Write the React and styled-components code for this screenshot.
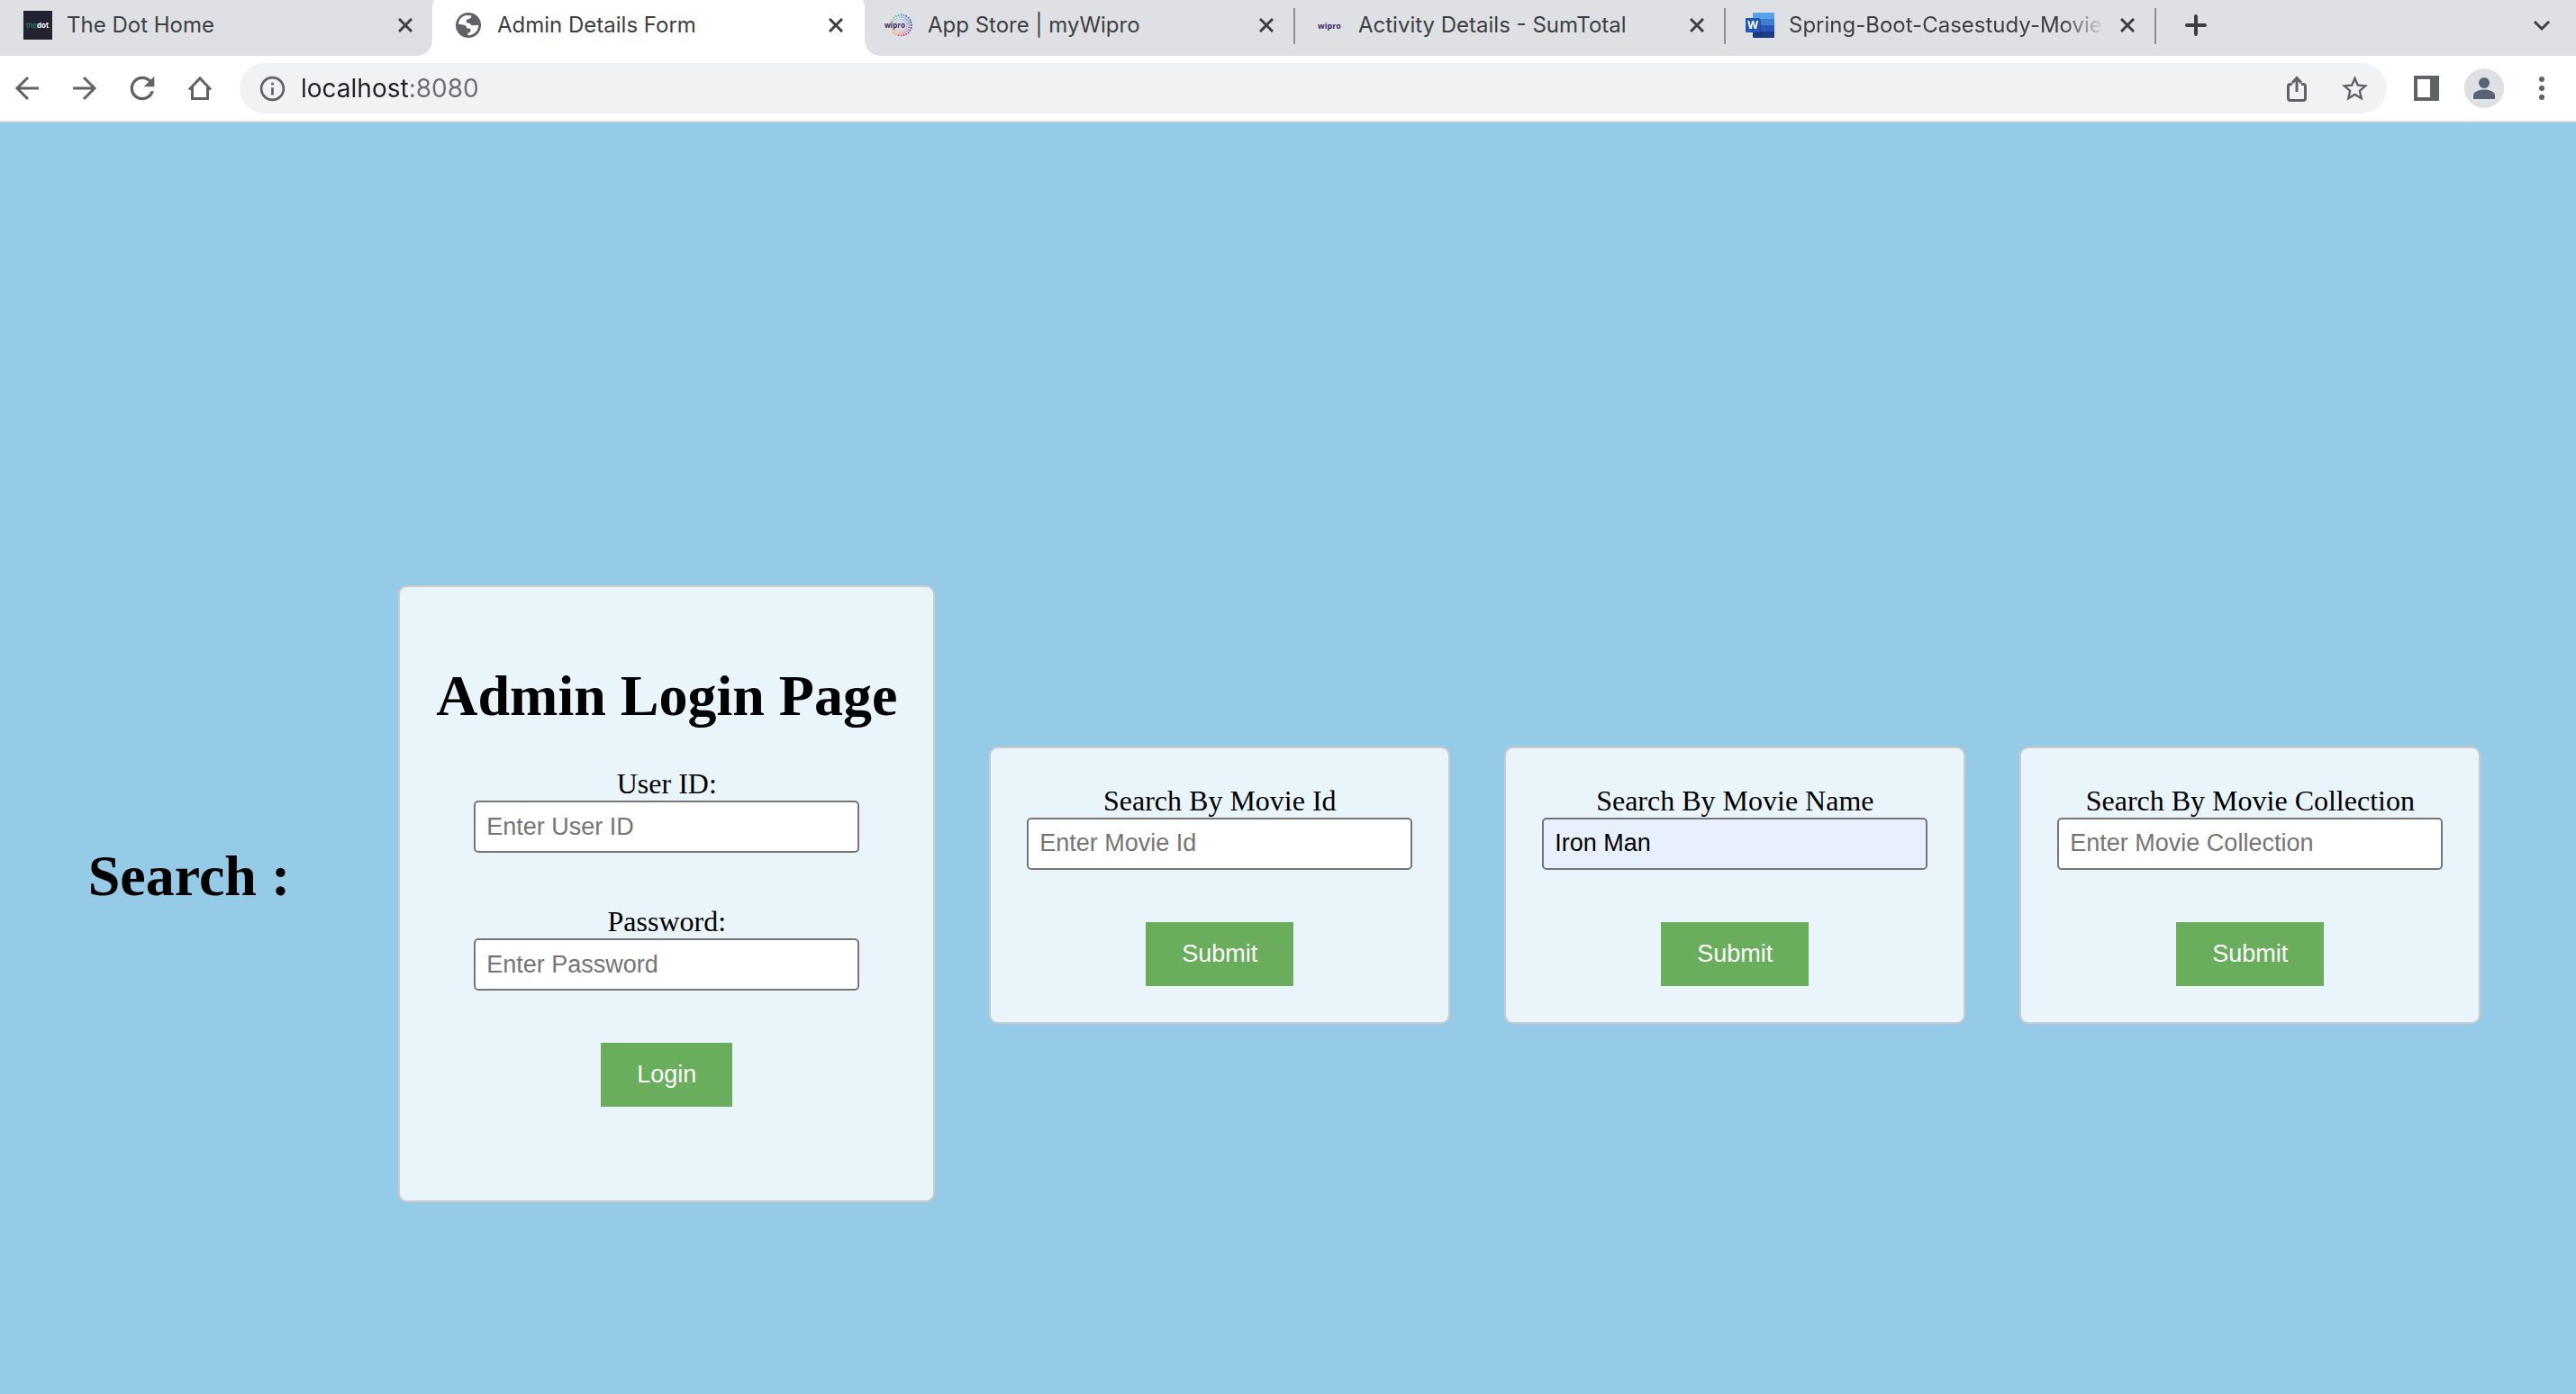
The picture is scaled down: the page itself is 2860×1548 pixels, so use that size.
import React, { useState } from "react";
import styled, { createGlobalStyle, css } from "styled-components";
import { MdRefresh, MdInfoOutline, MdStarBorder } from "react-icons/md";

const GlobalStyle = createGlobalStyle`
  * { box-sizing: border-box; }
  body {
    margin: 0;
    background: #96cbe8;
    font-family: "Liberation Serif", "Times New Roman", serif;
  }
`;

const uiFont = css`
  font-family: Inter, Roboto, sans-serif;
`;

/* ---------- Browser chrome ---------- */

const divider = css`
  background: linear-gradient(#8b8e93, #8b8e93) 0 9px / 2px 40px no-repeat;
`;

const TabStrip = styled.div`
  display: flex;
  height: 62px;
  padding: 0 6px 0 2px;
  background: #dee0e4;
  overflow: hidden;
`;

const Tab = styled.div`
  position: relative;
  display: flex;
  align-items: center;
  gap: 16px;
  flex: 0 1 478px;
  min-width: 0;
  height: 56px;
  padding: 0 22px 0 24px;
  ${(p) => p.$divided && divider}
  ${(p) =>
    p.$active &&
    css`
      flex-basis: 480px;
      height: 70px;
      margin: -8px -2px 0 0;
      padding: 8px 24px 6px;
      border-radius: 16px 16px 0 0;
      background: #fff;
      &::before,
      &::after {
        content: "";
        position: absolute;
        bottom: 0;
        width: 16px;
        height: 16px;
      }
      &::before {
        left: -16px;
        background: radial-gradient(circle at 0 0, transparent 15px, #fff 16px);
      }
      &::after {
        right: -16px;
        background: radial-gradient(circle at 100% 0, transparent 15px, #fff 16px);
      }
    `}
`;

const TabTitle = styled.span`
  ${uiFont}
  flex: 1;
  min-width: 0;
  overflow: hidden;
  white-space: nowrap;
  font-size: 24px;
  line-height: 32px;
  color: #3c4043;
  ${(p) =>
    p.$faded &&
    css`
      mask-image: linear-gradient(90deg, #000 calc(100% - 48px), transparent);
    `}
`;

const Favicon = styled.span`
  display: flex;
  flex: none;
  align-items: center;
  justify-content: center;
  width: 32px;
  height: 32px;
  color: #5f6368;
`;

const PlainButton = styled.button`
  display: flex;
  flex: none;
  align-items: center;
  justify-content: center;
  padding: 0;
  border: 0;
  background: none;
  color: #5f6368;
`;

const CloseButton = styled(PlainButton)`
  width: 16px;
  height: 16px;
  color: #3c4043;
`;

const NewTabButton = styled(PlainButton)`
  width: 92px;
  height: 56px;
  color: #3c4043;
  ${divider}
`;

const TabSearchButton = styled(PlainButton)`
  width: 64px;
  height: 56px;
  margin-left: auto;
  color: #3c4043;
`;

const Toolbar = styled.div`
  display: flex;
  align-items: center;
  gap: 20px;
  height: 74px;
  padding: 0 14px 0 6px;
  border-bottom: 2px solid #dadcdf;
  background: #fff;
`;

const ButtonGroup = styled.div`
  display: flex;
  gap: 16px;
`;

const IconButton = styled(PlainButton)`
  width: 48px;
  height: 48px;
`;

const AddressBar = styled.div`
  display: flex;
  flex: 1;
  align-items: center;
  gap: 8px;
  min-width: 0;
  height: 56px;
  padding: 0 12px;
  border-radius: 28px;
  background: #f0f2f4;
`;

/* The host is drawn darker than the port. */
const AddressInput = styled.input`
  ${uiFont}
  flex: 1;
  min-width: 0;
  padding: 0;
  border: 0;
  outline: 0;
  font-size: 28px;
  line-height: 40px;
  color: transparent;
  caret-color: #202124;
  background: linear-gradient(90deg, #202124 120px, #6b6f74 120px);
  background-clip: text;
`;

/* ---------- Page ---------- */

const Main = styled.main`
  display: flex;
  align-items: center;
  justify-content: center;
  gap: 60px;
  padding: 514px 8px 60px 0;
`;

const Title = styled.h1`
  margin: 0;
  font-size: 64px;
  line-height: 74px;
  font-weight: bold;
  color: #000;
`;

const SearchTitle = styled(Title)`
  margin: 0 60px 40px 0;
  white-space: nowrap;
`;

const Card = styled.form`
  display: flex;
  flex-direction: column;
  align-items: center;
  gap: 58px;
  margin-bottom: 20px;
  padding: 40px;
  border: 2px solid #ccc;
  border-radius: 10px;
  background: #e9f5fa;
`;

const LoginCard = styled(Card)`
  margin-bottom: 0;
  padding: 84px 40px 104px;
`;

const LoginHead = styled.div`
  display: flex;
  flex-direction: column;
  align-items: center;
  gap: 42px;
`;

const Field = styled.div`
  display: flex;
  flex-direction: column;
  align-items: center;
`;

const Label = styled.label`
  font-size: 32px;
  line-height: 37px;
  color: #000;
`;

const TextInput = styled.input`
  width: 428px;
  height: 58px;
  padding: 0 12px;
  border: 2px solid #767676;
  border-radius: 5px;
  outline: 0;
  background: ${(p) => (p.$filled ? "#e8effd" : "#fff")};
  font-family: "Liberation Sans", Arial, sans-serif;
  font-size: 27px;
  color: #000;
  &::placeholder {
    color: #757575;
    opacity: 1;
  }
`;

const ActionButton = styled.button`
  height: 71px;
  padding: 0 40px;
  border: 0;
  background: #69ad5d;
  font-family: "Liberation Sans", Arial, sans-serif;
  font-size: 27px;
  color: #fff;
`;

/* ---------- Drawings ---------- */

const Glyph = ({ children, size = 48, width = 3 }) => (
  <svg
    width={size}
    height={size}
    viewBox={`0 0 ${size} ${size}`}
    fill="none"
    stroke="currentColor"
    strokeWidth={width}
    aria-hidden="true"
  >
    {children}
  </svg>
);

const CloseIcon = () => (
  <Glyph size={16}>
    <path d="M1 1L15 15M15 1L1 15" />
  </Glyph>
);

const GlobeIcon = () => (
  <svg width="28" height="28" viewBox="30 30 84 84" aria-hidden="true">
    <circle cx="72" cy="72" r="42" fill="#5f6368" />
    <path
      d="M64 39L82 40L81 47L72 52L66 53L65 62L72 65L77 65L81 71L88 73L106 71C105 90 92 105 70 106L70 98L78 95L80 88L77 83L66 82L65 75L58 71L39 68C40 53 50 42 64 39z"
      fill="#fff"
    />
  </svg>
);

const DotIcon = () => (
  <svg width="32" height="32" viewBox="0 0 32 32" aria-hidden="true">
    <rect width="32" height="32" fill="#212330" />
    <text x="3" y="19" fontFamily="Inter, sans-serif" fontSize="8" fill="#2f8577">
      the<tspan fill="#fff" fontWeight="700">dot</tspan>.
    </text>
  </svg>
);

const ringColors = ["#3f6fb5", "#2b4a9b", "#4b3a8c", "#8a3a8c", "#c43d78", "#e0567a", "#f0a050", "#f2c860", "#b9d58a", "#7cc4a0", "#6cb8d8", "#4f93cc"];

const WiproRingIcon = () => (
  <svg width="32" height="32" viewBox="0 0 32 32" aria-hidden="true">
    {[11.5, 9, 6.5, 4].map((r, ring) =>
      Array.from({ length: 24 }, (_, i) => {
        const a = (i / 24) * Math.PI * 2 - Math.PI / 3;
        return (
          <circle
            key={`${ring}-${i}`}
            cx={18.5 + r * Math.cos(a)}
            cy={16 + r * Math.sin(a)}
            r={1 - ring * 0.2}
            opacity={1 - ring * 0.22}
            fill={ringColors[Math.floor(i / 2)]}
          />
        );
      })
    )}
    <text x="0" y="19" fontFamily="Open Sans, sans-serif" fontSize="8" fontWeight="700" fill="#3f2a6b">
      wipro
    </text>
  </svg>
);

const WiproIcon = () => (
  <svg width="32" height="32" viewBox="0 0 32 32" aria-hidden="true">
    <text x="16" y="20" textAnchor="middle" fontFamily="Open Sans, sans-serif" fontSize="9" fontWeight="700" fill="#3f2a6b">
      wipro
    </text>
  </svg>
);

const WordIcon = () => (
  <svg width="32" height="32" viewBox="0 0 32 32" aria-hidden="true">
    <path d="M9 2H31a1 1 0 0 1 1 1V9H8V3a1 1 0 0 1 1-1z" fill="#5aa3ea" />
    <path d="M8 9H32V16H8z" fill="#3f7bd0" />
    <path d="M8 16H32V23H8z" fill="#2758b8" />
    <path d="M8 23H32V29a1 1 0 0 1-1 1H9a1 1 0 0 1-1-1z" fill="#1d3b85" />
    <path d="M8 10h9v15a1 1 0 0 1-1 1H8z" fill="#16306e" opacity=".5" />
    <rect y="8" width="16" height="16" rx="1" fill="#2257b7" />
    <text x="8" y="20" textAnchor="middle" fontFamily="Open Sans, sans-serif" fontSize="12" fontWeight="700" fill="#fff">
      W
    </text>
  </svg>
);

const BackIcon = () => (
  <Glyph>
    <path d="M37 24H13M25 12L13 24L25 36" />
  </Glyph>
);

const ForwardIcon = () => (
  <Glyph>
    <path d="M11 24H35M23 12L35 24L23 36" />
  </Glyph>
);

const HomeIcon = () => (
  <Glyph>
    <path d="M12 25.5L24 13L36 25.5M15.5 23V35.5H32.5V23" />
  </Glyph>
);

const ShareIcon = () => (
  <Glyph>
    <path d="M19 19.5H17a2.5 2.5 0 0 0-2.5 2.5V35a2.5 2.5 0 0 0 2.5 2.5H31a2.5 2.5 0 0 0 2.5-2.5V22a2.5 2.5 0 0 0-2.5-2.5H29M24 28V12.5M19 18L24 12.5L29 18" />
  </Glyph>
);

const PanelIcon = () => (
  <Glyph width={4}>
    <path d="M12 12H36V36H12z" />
    <path d="M28 10H38V38H28z" fill="currentColor" stroke="none" />
  </Glyph>
);

const AvatarIcon = () => (
  <svg width="48" height="48" viewBox="0 0 48 48" aria-hidden="true">
    <circle cx="24" cy="24" r="22" fill="#dee0e4" />
    <circle cx="24" cy="18" r="6" fill="#5a6375" />
    <path d="M12 36V32C12 28 18 25.5 24 25.5S36 28 36 32V36z" fill="#5a6375" />
  </svg>
);

const MenuIcon = () => (
  <svg width="48" height="48" viewBox="0 0 48 48" fill="currentColor" aria-hidden="true">
    <circle cx="24" cy="14" r="3" />
    <circle cx="24" cy="24" r="3" />
    <circle cx="24" cy="34" r="3" />
  </svg>
);

const tabs = [
  { title: "The Dot Home", icon: <DotIcon /> },
  { title: "Admin Details Form", icon: <GlobeIcon />, active: true },
  { title: "App Store | myWipro", icon: <WiproRingIcon /> },
  { title: "Activity Details - SumTotal", icon: <WiproIcon />, divided: true },
  { title: "Spring-Boot-Casestudy-Movie", icon: <WordIcon />, divided: true, faded: true },
];

const searches = [
  { id: "movie-id", label: "Search By Movie Id", placeholder: "Enter Movie Id" },
  { id: "movie-name", label: "Search By Movie Name", placeholder: "Enter Movie Name", initial: "Iron Man" },
  { id: "movie-collection", label: "Search By Movie Collection", placeholder: "Enter Movie Collection" },
];

const stop = (e) => e.preventDefault();

function LabeledInput({ id, label, initial = "", ...rest }) {
  const [value, setValue] = useState(initial);
  return (
    <Field>
      <Label htmlFor={id}>{label}</Label>
      <TextInput
        id={id}
        value={value}
        $filled={initial !== "" && value === initial}
        onChange={(e) => setValue(e.target.value)}
        {...rest}
      />
    </Field>
  );
}

export default function App() {
  return (
    <>
      <GlobalStyle />
      <header>
        <TabStrip>
          {tabs.map((t) => (
            <Tab key={t.title} $active={t.active} $divided={t.divided}>
              <Favicon>{t.icon}</Favicon>
              <TabTitle $faded={t.faded}>{t.title}</TabTitle>
              <CloseButton type="button" aria-label={`Close ${t.title}`}>
                <CloseIcon />
              </CloseButton>
            </Tab>
          ))}
          <NewTabButton type="button" aria-label="New tab">
            <Glyph size={24} width={4}>
              <path d="M12 2V22M2 12H22" strokeLinecap="round" />
            </Glyph>
          </NewTabButton>
          <TabSearchButton type="button" aria-label="Search tabs">
            <Glyph size={24}>
              <path d="M4 8L12 16L20 8" />
            </Glyph>
          </TabSearchButton>
        </TabStrip>
        <Toolbar>
          <ButtonGroup>
            <IconButton type="button" aria-label="Back"><BackIcon /></IconButton>
            <IconButton type="button" aria-label="Forward"><ForwardIcon /></IconButton>
            <IconButton type="button" aria-label="Reload"><MdRefresh size={40} /></IconButton>
            <IconButton type="button" aria-label="Home"><HomeIcon /></IconButton>
          </ButtonGroup>
          <AddressBar>
            <IconButton type="button" aria-label="Site information"><MdInfoOutline size={33} /></IconButton>
            <AddressInput aria-label="Address" defaultValue="localhost:8080" />
            <ButtonGroup>
              <IconButton type="button" aria-label="Share"><ShareIcon /></IconButton>
              <IconButton type="button" aria-label="Bookmark"><MdStarBorder size={35} /></IconButton>
            </ButtonGroup>
          </AddressBar>
          <ButtonGroup>
            <IconButton type="button" aria-label="Side panel"><PanelIcon /></IconButton>
            <IconButton type="button" aria-label="Profile"><AvatarIcon /></IconButton>
            <IconButton type="button" aria-label="Menu"><MenuIcon /></IconButton>
          </ButtonGroup>
        </Toolbar>
      </header>
      <Main>
        <SearchTitle>Search :</SearchTitle>
        <LoginCard onSubmit={stop}>
          <LoginHead>
            <Title>Admin Login Page</Title>
            <LabeledInput id="user-id" label="User ID:" placeholder="Enter User ID" />
          </LoginHead>
          <LabeledInput id="password" label="Password:" type="password" placeholder="Enter Password" />
          <ActionButton type="submit">Login</ActionButton>
        </LoginCard>
        {searches.map((s) => (
          <Card key={s.id} onSubmit={stop}>
            <LabeledInput {...s} />
            <ActionButton type="submit">Submit</ActionButton>
          </Card>
        ))}
      </Main>
    </>
  );
}
